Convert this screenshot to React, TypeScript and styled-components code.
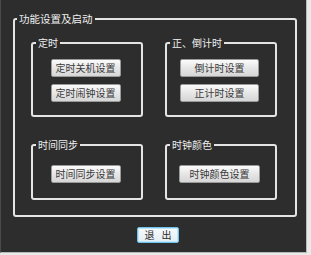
import styled, { createGlobalStyle } from "styled-components";

const GlobalStyle = createGlobalStyle`
  html, body {
    margin: 0;
    padding: 0;
    background: #e9e9e9;
  }
  body {
    font-family: "Noto Sans CJK SC", "Noto Sans", sans-serif;
  }
`;

const Panel = styled.div`
  width: 307px;
  height: 253px;
  box-sizing: border-box;
  background: #2d2d2d;
  border-right: 1px solid #b9b9b9;
  border-bottom: 1px solid #b9b9b9;
  border-left: 1px solid #4a4a4a;
  padding: 12px 0 0 12px;
  display: flex;
  flex-direction: column;
`;

const OuterGroup = styled.fieldset`
  width: 284px;
  box-sizing: border-box;
  margin: 0;
  padding: 0;
  min-width: 0;
  border: 2px solid #e4e4e4;
  border-radius: 3px;
`;

const Legend = styled.legend<{ $size: number }>`
  margin-left: ${(p) => (p.$size > 10 ? 2 : 3)}px;
  padding: 0 2px;
  font-size: ${(p) => p.$size}px;
  line-height: 14px;
  color: #f0f0f0;
`;

const Grid = styled.div`
  display: grid;
  grid-template-columns: 112px 112px;
  grid-template-rows: 81px 62px;
  column-gap: 22px;
  row-gap: 21px;
  padding: 10px 18px 15px 16px;
`;

const Group = styled.fieldset`
  box-sizing: border-box;
  margin: 0;
  padding: 0;
  min-width: 0;
  border: 2px solid #e4e4e4;
  border-radius: 3px;
  display: flex;
  flex-direction: column;
`;

const GroupBody = styled.div<{ $top: number }>`
  flex: 1;
  display: flex;
  flex-direction: column;
  align-items: center;
  gap: 7px;
  padding: ${(p) => p.$top}px 3px 0 0;
`;

const SetButton = styled.button<{ $w: number }>`
  width: ${(p) => p.$w}px;
  height: 18px;
  box-sizing: border-box;
  padding: 0;
  border: 1px solid #9a9a9a;
  border-radius: 2px;
  background: linear-gradient(#fbfbfb, #e6e6e6 50%, #d6d6d6);
  font-family: inherit;
  font-size: 10px;
  line-height: 16px;
  color: #3a3a3a;
  cursor: pointer;
`;

const ExitRow = styled.div`
  display: flex;
  padding: 10px 0 0 124px;
`;

const ExitButton = styled.button`
  width: 42px;
  height: 16px;
  box-sizing: border-box;
  padding: 0;
  border: 1px solid #6ec4ea;
  border-radius: 2px;
  box-shadow: inset 0 0 0 1px #bfe6f7;
  background: linear-gradient(#f7fbfd, #e3eef3);
  font-family: inherit;
  font-size: 10px;
  line-height: 14px;
  white-space: pre;
  word-spacing: 5px;
  color: #2a2a2a;
  cursor: pointer;
`;

const groups = [
  { title: "定时", top: 9, buttons: [["定时关机设置", 70], ["定时闹钟设置", 70]] },
  { title: "正、倒计时", top: 9, buttons: [["倒计时设置", 79], ["正计时设置", 79]] },
  { title: "时间同步", top: 13, buttons: [["时间同步设置", 70]] },
  { title: "时钟颜色", top: 13, buttons: [["时钟颜色设置", 81]] },
] as const;

function App() {
  return (
    <>
      <GlobalStyle />
      <Panel>
        <OuterGroup>
          <Legend $size={10.5}>功能设置及启动</Legend>
          <Grid>
            {groups.map((g) => (
              <Group key={g.title}>
                <Legend $size={10}>{g.title}</Legend>
                <GroupBody $top={g.top}>
                  {g.buttons.map(([label, w]) => (
                    <SetButton key={label} $w={w}>
                      {label}
                    </SetButton>
                  ))}
                </GroupBody>
              </Group>
            ))}
          </Grid>
        </OuterGroup>
        <ExitRow>
          <ExitButton>退 出</ExitButton>
        </ExitRow>
      </Panel>
    </>
  );
}

export default App;
